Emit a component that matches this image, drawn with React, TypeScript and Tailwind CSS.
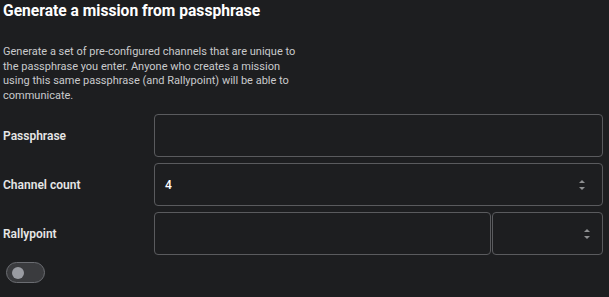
import React from 'react';

function Spinner() {
  return (
    <svg width="8" height="14" viewBox="0 0 8 14" className="text-[#8e8f91]">
      <path d="M1 5 L4 2 L7 5 Z" fill="currentColor" />
      <path d="M1 9 L4 12 L7 9 Z" fill="currentColor" />
    </svg>
  );
}

const font = { fontFamily: 'Roboto, "Liberation Sans", sans-serif' };

export default function App() {
  return (
    <div className="min-h-screen w-full bg-[#1d1e20] text-white pl-[3px] pr-[6px]" style={font}>
      <h2 className="pt-[1px] text-[15.6px] font-bold leading-[20px]">Generate a mission from passphrase</h2>

      <p className="mt-[24px] w-[300px] text-[11px] leading-[14.6px] text-[#c9cacc]">
        Generate a set of pre-configured channels that are unique to the passphrase you enter. Anyone who creates a
        mission using this same passphrase (and Rallypoint) will be able to communicate.
      </p>

      <div className="mt-[11px] flex flex-col gap-[6px]">
        {/* passphrase */}
        <div className="flex items-center">
          <label className="w-[151px] text-[12px] font-semibold text-[#e6e6e6]">Passphrase</label>
          <div className="h-[43px] flex-1 rounded-[4px] border border-[#5a5b5e]" />
        </div>

        {/* channel count */}
        <div className="flex items-center">
          <label className="w-[151px] text-[12px] font-semibold text-[#e6e6e6]">Channel count</label>
          <div className="flex h-[43px] flex-1 items-center justify-between rounded-[4px] border border-[#5a5b5e] pl-[10px] pr-[16px]">
            <span className="text-[12px] font-medium">4</span>
            <Spinner />
          </div>
        </div>

        {/* rallypoint */}
        <div className="flex items-center">
          <label className="w-[151px] text-[12px] font-semibold text-[#e6e6e6]">Rallypoint</label>
          <div className="flex flex-1 gap-[1px]">
            <div className="h-[43px] w-[337px] rounded-[4px] border border-[#5a5b5e]" />
            <div className="flex h-[43px] flex-1 items-center justify-end rounded-[4px] border border-[#5a5b5e] pr-[11px]">
              <Spinner />
            </div>
          </div>
        </div>
      </div>

      <div className="mt-[7px] ml-[3px] flex h-[21px] w-[39px] items-center rounded-full border border-[#6b6d72] bg-[#3a3b3e] pl-[5px]">
        <span className="h-[12px] w-[12px] rounded-full bg-[#9a9ca2]" />
      </div>
    </div>
  );
}
